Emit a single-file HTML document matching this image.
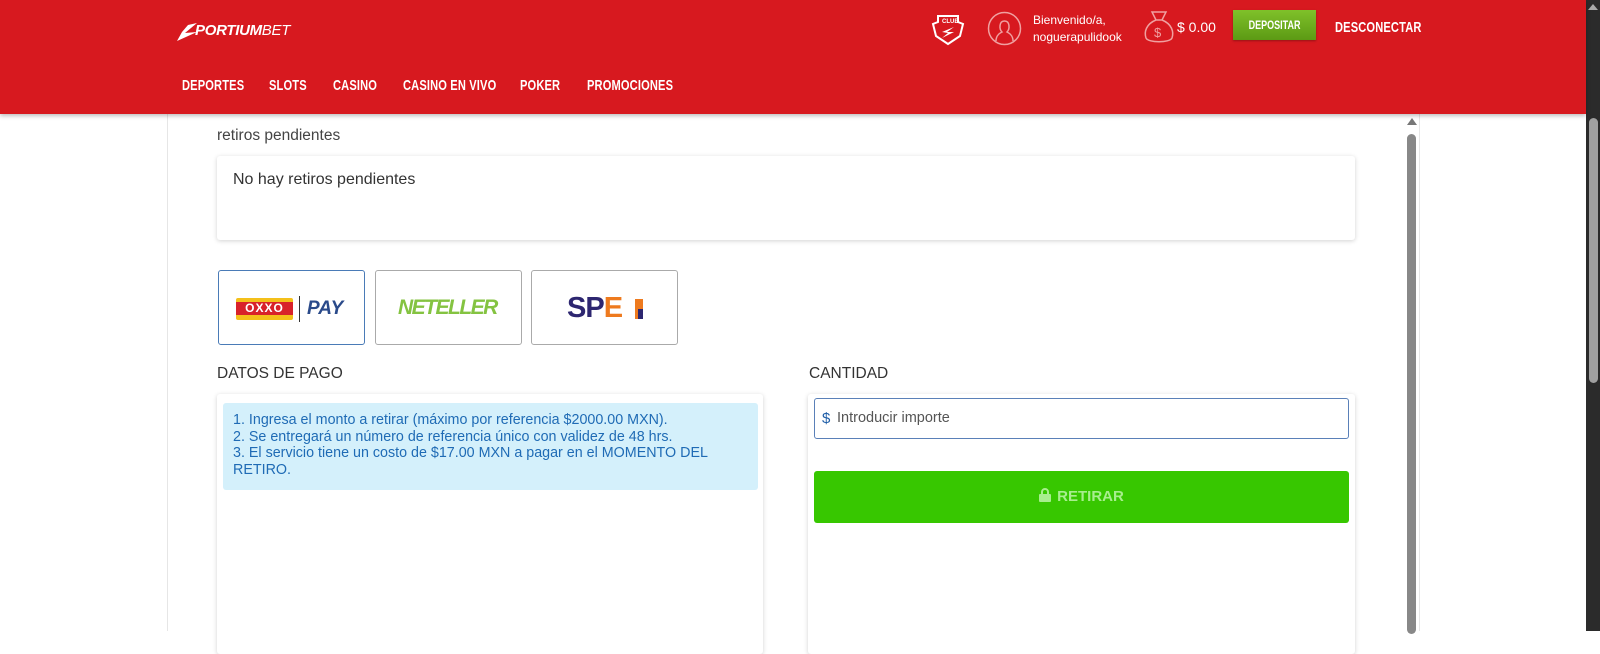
<!DOCTYPE html><html><head><style>
*{box-sizing:border-box;margin:0;padding:0}
body{width:1600px;height:631px;overflow:hidden;background:#fff;font-family:"Liberation Sans",sans-serif;position:relative}
.hdr{position:absolute;left:0;top:0;width:1586px;height:114px;background:#d7191f;box-shadow:0 2px 4px rgba(0,0,0,.25);z-index:2}
.nav{position:absolute;top:77px;color:#fff;font-weight:bold;font-size:15px;transform:scaleX(.74);transform-origin:left;letter-spacing:.2px;white-space:nowrap}
.w{position:absolute;color:#fff}
.sb{position:absolute;left:1586px;top:0;width:14px;height:631px;background:#2b2b2b}
.main{position:absolute;left:167px;top:114px;width:1253px;height:517px;border-left:1px solid #e6e6e6;border-right:1px solid #e6e6e6}
.card{position:absolute;background:#fff;box-shadow:0 1px 5px rgba(0,0,0,.18);border-radius:3px}
.pm{position:absolute;top:270px;width:147px;height:75px;border:1px solid #aaa;border-radius:3px;background:#fff}
</style></head><body>
<div class="hdr">
<div class="w" style="left:177px;top:22px;font-size:15px;font-weight:bold;font-style:italic;letter-spacing:-.3px;white-space:nowrap">
<svg width="22" height="20" style="position:absolute;left:0;top:0"><path d="M0 19 L20 10 L8 11 L20 1 L11 3 L5 10 Z" fill="#fff"/></svg>
<span style="margin-left:18px">PORTIUM</span><span style="font-weight:normal">BET</span></div>
<div class="nav" style="left:182px">DEPORTES</div>
<div class="nav" style="left:269px">SLOTS</div>
<div class="nav" style="left:333px">CASINO</div>
<div class="nav" style="left:403px">CASINO EN VIVO</div>
<div class="nav" style="left:520px">POKER</div>
<div class="nav" style="left:587px">PROMOCIONES</div>
<svg style="position:absolute;left:930px;top:10px" width="36" height="36" viewBox="0 0 36 36"><path d="M8 6 L28 6 L28 12 L33 14 L30 26 L18 34 L6 26 L3 14 L8 12 Z" fill="none" stroke="#fff" stroke-width="2"/><text x="12" y="13" font-size="6" fill="#fff" font-weight="bold">CLUB</text><path d="M12 22 L24 17 L17 22 L24 22 L12 28 L18 23Z" fill="#fff"/></svg>
<svg style="position:absolute;left:987px;top:11px" width="35" height="35" viewBox="0 0 35 35"><circle cx="17.5" cy="17.5" r="16" fill="none" stroke="#f0a0a0" stroke-width="1.5"/><path d="M9 30 C9 24 13 22 15 21 C12 18 12 10 17.5 10 C23 10 23 18 20 21 C22 22 26 24 26 30" fill="none" stroke="#f0a0a0" stroke-width="1.5"/></svg>
<div class="w" style="left:1033px;top:12px;font-size:12px;line-height:17px">Bienvenido/a,<br>noguerapulidook</div>
<svg style="position:absolute;left:1142px;top:10px" width="34" height="35" viewBox="0 0 34 35"><path d="M10 2 L24 2 L20 10 L14 10 Z M14 10 C4 14 2 22 4 28 C6 33 28 33 30 28 C32 22 30 14 20 10" fill="none" stroke="#f0a0a0" stroke-width="1.5"/><text x="12" y="27" font-size="13" fill="#f0a0a0">$</text></svg>
<div class="w" style="left:1177px;top:19px;font-size:14px">$ 0.00</div>
<div style="position:absolute;left:1233px;top:10px;width:83px;height:30px;background:linear-gradient(#7fc12a,#5c9a14);color:#fff;font-size:12px;font-weight:bold;text-align:center;line-height:30px;box-shadow:0 1px 2px rgba(0,0,0,.3)"><span style="display:inline-block;transform:scaleX(.75)">DEPOSITAR</span></div>
<div class="nav" style="left:1335px;top:19px">DESCONECTAR</div>
</div>
<div class="sb"><div style="position:absolute;left:3px;top:118px;width:9px;height:265px;background:#a0a0a0;border-radius:5px"></div><div style="position:absolute;left:2px;top:4px;border:5px solid transparent;border-bottom:6px solid #aaa;border-top:0"></div></div>
<div class="main"></div>
<div style="position:absolute;left:1407px;top:118px;border:5px solid transparent;border-bottom:7px solid #777;border-top:0"></div>
<div style="position:absolute;left:1407px;top:134px;width:9px;height:500px;background:#888;border-radius:5px"></div>
<div style="position:absolute;left:217px;top:127px;font-size:15.5px;color:#444">retiros pendientes</div>
<div class="card" style="left:217px;top:156px;width:1138px;height:84px"><div style="position:absolute;left:16px;top:15px;font-size:16px;color:#333">No hay retiros pendientes</div></div>
<div class="pm" style="left:218px;border-color:#4a7bb7"><div style="position:absolute;left:17px;top:27px;width:57px;height:22px;background:#f4c01a;border-radius:2px"><div style="position:absolute;left:0;top:4px;width:57px;height:13px;background:#d8222a;color:#fff;font-weight:bold;font-size:12px;line-height:13px;text-align:center;letter-spacing:1px">OXXO</div></div><div style="position:absolute;left:80px;top:25px;width:1px;height:26px;background:#333"></div><div style="position:absolute;left:88px;top:27px;font-size:19px;font-weight:bold;font-style:italic;color:#2a4a8a">PAY</div></div>
<div class="pm" style="left:375px"><div style="position:absolute;left:22px;top:25px;font-size:21px;font-weight:bold;font-style:italic;color:#84c341;letter-spacing:-1.5px">NETELLER</div></div>
<div class="pm" style="left:531px"><div style="position:absolute;left:35px;top:21px;font-size:29px;font-weight:bold;color:#2d2670;letter-spacing:-1px">SP<span style="color:#ee7a1e">E</span></div><div style="position:absolute;left:103px;top:28px;width:8px;height:20px;background:#ee7a1e"></div><div style="position:absolute;left:106px;top:38px;width:5px;height:10px;background:#2d2670"></div></div>
<div style="position:absolute;left:217px;top:365px;font-size:15.5px;color:#333">DATOS DE PAGO</div>
<div style="position:absolute;left:809px;top:365px;font-size:15.5px;color:#333">CANTIDAD</div>
<div class="card" style="left:217px;top:394px;width:546px;height:260px"><div style="position:absolute;left:6px;top:9px;width:535px;height:87px;background:#d4f0fb;border-radius:3px;color:#1f6bb5;font-size:14.3px;line-height:16.5px;padding:9px 10px">1. Ingresa el monto a retirar (máximo por referencia $2000.00 MXN).<br>2. Se entregará un número de referencia único con validez de 48 hrs.<br>3. El servicio tiene un costo de $17.00 MXN a pagar en el MOMENTO DEL RETIRO.</div></div>
<div class="card" style="left:808px;top:394px;width:547px;height:260px">
<div style="position:absolute;left:6px;top:4px;width:535px;height:41px;border:1px solid #5a80b8;border-radius:3px"><span style="position:absolute;left:7px;top:11px;color:#1f5ea8;font-size:15px">$</span><span style="position:absolute;left:22px;top:11px;color:#555;font-size:14.5px">Introducir importe</span></div>
<div style="position:absolute;left:6px;top:77px;width:535px;height:52px;background:#37c700;border-radius:3px;color:#a8ee8e;font-weight:bold;font-size:15px;text-align:center;line-height:52px"><svg width="12" height="14" viewBox="0 0 12 14" style="vertical-align:-1px;margin-right:6px"><path d="M3 6 V4 A3 3 0 0 1 9 4 V6" fill="none" stroke="#a8ee8e" stroke-width="2"/><rect x="0" y="6" width="12" height="8" rx="1" fill="#a8ee8e"/></svg>RETIRAR</div>
</div>
</body></html>
